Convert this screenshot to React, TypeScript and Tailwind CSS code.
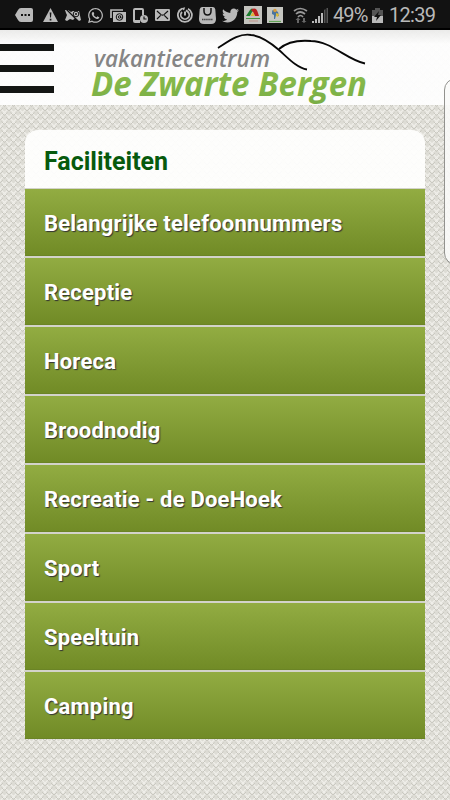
import type { ReactNode } from "react";
import { FaTwitter, FaWhatsapp } from "react-icons/fa";

const facilities = [
  "Belangrijke telefoonnummers",
  "Receptie",
  "Horeca",
  "Broodnodig",
  "Recreatie - de DoeHoek",
  "Sport",
  "Speeltuin",
  "Camping",
];

function StatusIcon({ className, box, children }: { className: string; box: string; children: ReactNode }) {
  return (
    <svg className={`shrink-0 ${className}`} viewBox={box} fill="currentColor" aria-hidden="true">
      {children}
    </svg>
  );
}

function StatusBar() {
  return (
    <div className="flex h-[30px] items-center border-b-2 border-black bg-[#121212] pl-[15px] pt-[2px] text-[#b9b9b9]">
      <StatusIcon className="h-[14px] w-[18px]" box="0 0 18 14">
        <path d="M6 0h10q2 0 2 2v10q0 2-2 2H6Q4 14 3 12L0 7l3-5Q4 0 6 0Z" />
        <path d="M6 6h2v2H6zm3.5 0h2v2h-2zM13 6h2v2h-2z" fill="#121212" />
      </StatusIcon>
      <StatusIcon className="ml-[10px] h-[14px] w-[15px]" box="0 0 15 14">
        <path d="M7.5 0 15 14H0Z" />
        <path d="M6.7 4.5h1.7L8 9.6h-.9ZM6.7 10.7h1.7v1.7H6.7z" fill="#121212" />
      </StatusIcon>
      <StatusIcon className="ml-[7px] h-[13px] w-[16px]" box="0 0 16 13">
        <path d="M0 1h3l3 2 2-1h6l2 9-2 1-4-3-2 2-3-1-3 2-2-1 2-5-1-2Z" />
        <path d="m1 0 12 12" fill="none" stroke="#121212" strokeWidth="1.2" />
        <circle cx="11" cy="5" r="2.8" fill="#b9b9b9" stroke="#121212" />
        <circle cx="11" cy="5" r="1" fill="#121212" />
      </StatusIcon>
      <FaWhatsapp className="ml-[6px] size-[17px] shrink-0" />
      <StatusIcon className="ml-[6px] h-[13px] w-[16px]" box="0 0 16 13">
        <path d="M1 9V1h12" fill="none" stroke="currentColor" strokeWidth="1.7" />
        <path d="M3 3h13v10H3z" />
        <circle cx="9.5" cy="8" r="3.3" fill="none" stroke="#121212" />
        <circle cx="9.5" cy="8" r="1.2" fill="none" stroke="#121212" />
        <path d="M10.7 6.5v2.2q1 .8 2-.5" fill="none" stroke="#121212" strokeWidth=".8" />
      </StatusIcon>
      <StatusIcon className="ml-[7px] h-[15px] w-[15px]" box="0 0 15 15">
        <path d="M2 0h7q2 0 2 2v5H9V2H2v10h5v3H2q-2 0-2-2V2Q0 0 2 0Z" />
        <circle cx="11" cy="11" r="4" />
        <path d="M11 8.5V11h2.5" fill="none" stroke="#121212" strokeWidth="1.2" />
      </StatusIcon>
      <StatusIcon className="ml-[7px] h-[12px] w-[15px]" box="0 0 15 12">
        <rect width="15" height="12" rx="1.2" />
        <path d="m2 2 4 3.6q1.5 1.2 3 0L13 2M2 10l3.7-3.7M13 10 9.3 6.3" fill="none" stroke="#121212" strokeWidth="1.2" />
      </StatusIcon>
      <StatusIcon className="ml-[7px] h-[16px] w-[16px]" box="0 0 16 16">
        <path d="M11 1.7A7 7 0 1 1 5 1.6M5 5a4.2 4.2 0 1 0 6 0L9 3.3" fill="none" stroke="currentColor" strokeWidth="1.8" />
        <path d="M8 4.5v4" stroke="currentColor" strokeWidth="2" />
        <path d="M4 1.2 8.2.3 7 3.5Z" />
      </StatusIcon>
      <StatusIcon className="ml-[6px] h-[17px] w-[17px]" box="0 0 17 17">
        <path d="M3 0h11q2 0 2.3 2.5L17 12q0 5-5 5H5q-5 0-5-5L.7 2.5Q1 0 3 0Z" />
        <path d="M5 1v3q0 4 3.5 4T12 4V1" fill="none" stroke="#121212" strokeWidth="1.5" />
        <path d="M3 12.5h11" stroke="#444" strokeWidth="1.6" strokeDasharray="1.5 .6" />
      </StatusIcon>
      <FaTwitter className="ml-[6px] size-[17px] shrink-0" />
      <StatusIcon className="ml-[5px] h-[18px] w-[18px]" box="0 0 18 18">
        <path d="M0 0h18v18H0z" fill="#c3c3be" />
        <path d="M2 10 6 4q2-3 4 0L8 6l-2 4Z" fill="#1c7d2e" />
        <path d="M7 4q5-4 7 3l1 3h-4L9 6Z" fill="#b9201f" />
        <path d="m7 9 2-3 2 4H7Z" fill="#ddb633" />
        <path d="M2 12.5h14" stroke="#479342" strokeWidth="1" />
        <path d="M5 15h9" stroke="#c3776c" strokeWidth=".6" />
      </StatusIcon>
      <StatusIcon className="ml-[5px] h-[16px] w-[16px]" box="0 0 16 16">
        <path d="M0 0h16v16H0z" fill="#c5c6c1" />
        <path d="M5 5q0-3 3-2l3 2 1 4-3-1-1 4H7V8L5 7Z" fill="#49749f" />
        <circle cx="8" cy="3.5" r="1.7" fill="#d89b3c" />
        <path d="m9 6 3 1-1 3-2-1Z" fill="#dbba39" />
        <path d="M2 14.5h12" stroke="#63a458" strokeWidth="1.2" />
      </StatusIcon>
      <StatusIcon className="ml-[10px] h-[16px] w-[15px]" box="0 0 15 16">
        <path d="M1 4q6-5 13 0M3 7q4-4 9 0M5 10q2.5-3 5 0" fill="none" stroke="#999" strokeWidth="1.7" />
        <path d="M4 16v-3H2.5L5 10.5 7.5 13H6v3Zm6-5v3H8.5l2.5 2 2.5-2H12v-3Z" fill="#666" />
      </StatusIcon>
      <StatusIcon className="ml-[4px] h-[15px] w-[16px]" box="0 0 16 15">
        <path d="M0 15v-2h2v2zm3 0v-4h2v4zm3 0V8h2v7zm3 0V5h2v10z" />
        <path d="M12 15V2l1.5-1v14zm2.5 0V0H16v15z" fill="#555" />
      </StatusIcon>
      <span className="ml-[5px] w-[36px] whitespace-nowrap text-[20px] leading-none tracking-[-0.9px]">49%</span>
      <StatusIcon className="ml-[3px] h-[15px] w-[11px]" box="0 0 11 15">
        <path d="M3 0h5v2h3v13H0V2h3z" fill="#555" />
        <path d="M0 8h11v7H0z" />
        <path d="M7 3 2 9h3l-1 4 5-6H6Z" fill="#121212" />
      </StatusIcon>
      <span className="ml-[6px] whitespace-nowrap text-[20px] leading-none tracking-[-0.7px]">12:39</span>
    </div>
  );
}

function Logo() {
  return (
    <svg className="ml-[35px] h-[75px] w-[280px] shrink-0 overflow-visible" viewBox="90 30 280 75" role="img">
      <defs>
        <linearGradient id="logoGreen" x1="0" y1="0" x2="0" y2="1">
          <stop offset="0.2" stopColor="#8cbd4b" />
          <stop offset="1" stopColor="#78ad46" />
        </linearGradient>
      </defs>
      <g fontFamily="Open Sans, Noto Sans, sans-serif" fontStyle="italic">
        <text x="94" y="67" fill="#858585" fontSize="22.5" fontWeight="600" textLength="176" lengthAdjust="spacingAndGlyphs">
          vakantiecentrum
        </text>
        <text x="91" y="96" fill="url(#logoGreen)" fontSize="34" fontWeight="700" textLength="276" lengthAdjust="spacingAndGlyphs">
          De Zwarte Bergen
        </text>
      </g>
      <g fill="none" stroke="#080808" strokeWidth="1.8">
        <path d="M218 48C229 41 239 33 251 35C262 36 271 43 279 50C288 58 297 68 307 69.5" />
        <path d="M279 49C287 42 299 40 311 41C331 41 347 60 365 63.5" />
      </g>
    </svg>
  );
}

function Weave() {
  return (
    <svg className="pointer-events-none absolute inset-0 h-full w-full" aria-hidden="true">
      <defs>
        <pattern id="weave" width="9" height="9" patternUnits="userSpaceOnUse">
          <path d="M0 0h9v9H0z" fill="#dddcd5" />
          <path d="M0 0 9 9M9 0 0 9" stroke="#efeee9" strokeWidth="1.3" />
          <path d="m1.5 4.5 3 3 3-3M-3 0l3 3 3-3M6 0l3 3 3-3" fill="none" stroke="#c9c8c0" strokeWidth="1" />
        </pattern>
      </defs>
      <rect width="100%" height="100%" fill="url(#weave)" />
    </svg>
  );
}

export default function App() {
  return (
    <div className="relative h-[800px] w-[450px] overflow-hidden bg-[#deddd5] font-['Roboto',sans-serif]">
      <Weave />
      <div className="relative">
        <StatusBar />

        <header className="flex h-[75px] bg-linear-to-b from-[#ebebea]/95 to-[#fefefe]/95 to-[14px]">
          <button className="flex w-[55px] shrink-0 flex-col gap-[14px] pt-[14px]" aria-label="Menu">
            <span className="h-[7px] w-[54px] bg-[#141614]" />
            <span className="h-[7px] w-[54px] bg-[#141614]" />
            <span className="h-[7px] w-[54px] bg-[#141614]" />
          </button>
          <Logo />
        </header>

        <main className="mx-[25px] mt-[25px]">
          <h1 className="flex h-[58px] items-center rounded-t-[13px] bg-[#fefefd]/95 pl-[19px] pt-[5px] text-[25px] font-bold text-[#075a0d]">
            Faciliteiten
          </h1>
          <ul className="flex flex-col gap-[2px] bg-[#d3d3ca] pt-px">
            {facilities.map((name) => (
              <li
                key={name}
                className="flex h-[67px] items-center border-b border-[#6b8426] bg-linear-to-b from-[#92ac42] to-[#718b26] pl-[19px] pt-[3px] text-[22px] font-bold tracking-[0.2px] text-white [text-shadow:1px_1px_1px_#333]"
              >
                {name}
              </li>
            ))}
          </ul>
        </main>
      </div>

      {/* edge panel handle */}
      <div className="absolute left-[444px] top-[78px] h-[187px] w-[24px] rounded-[16px] border border-[#92928e] bg-[#f9f9f8]/90" />
    </div>
  );
}
